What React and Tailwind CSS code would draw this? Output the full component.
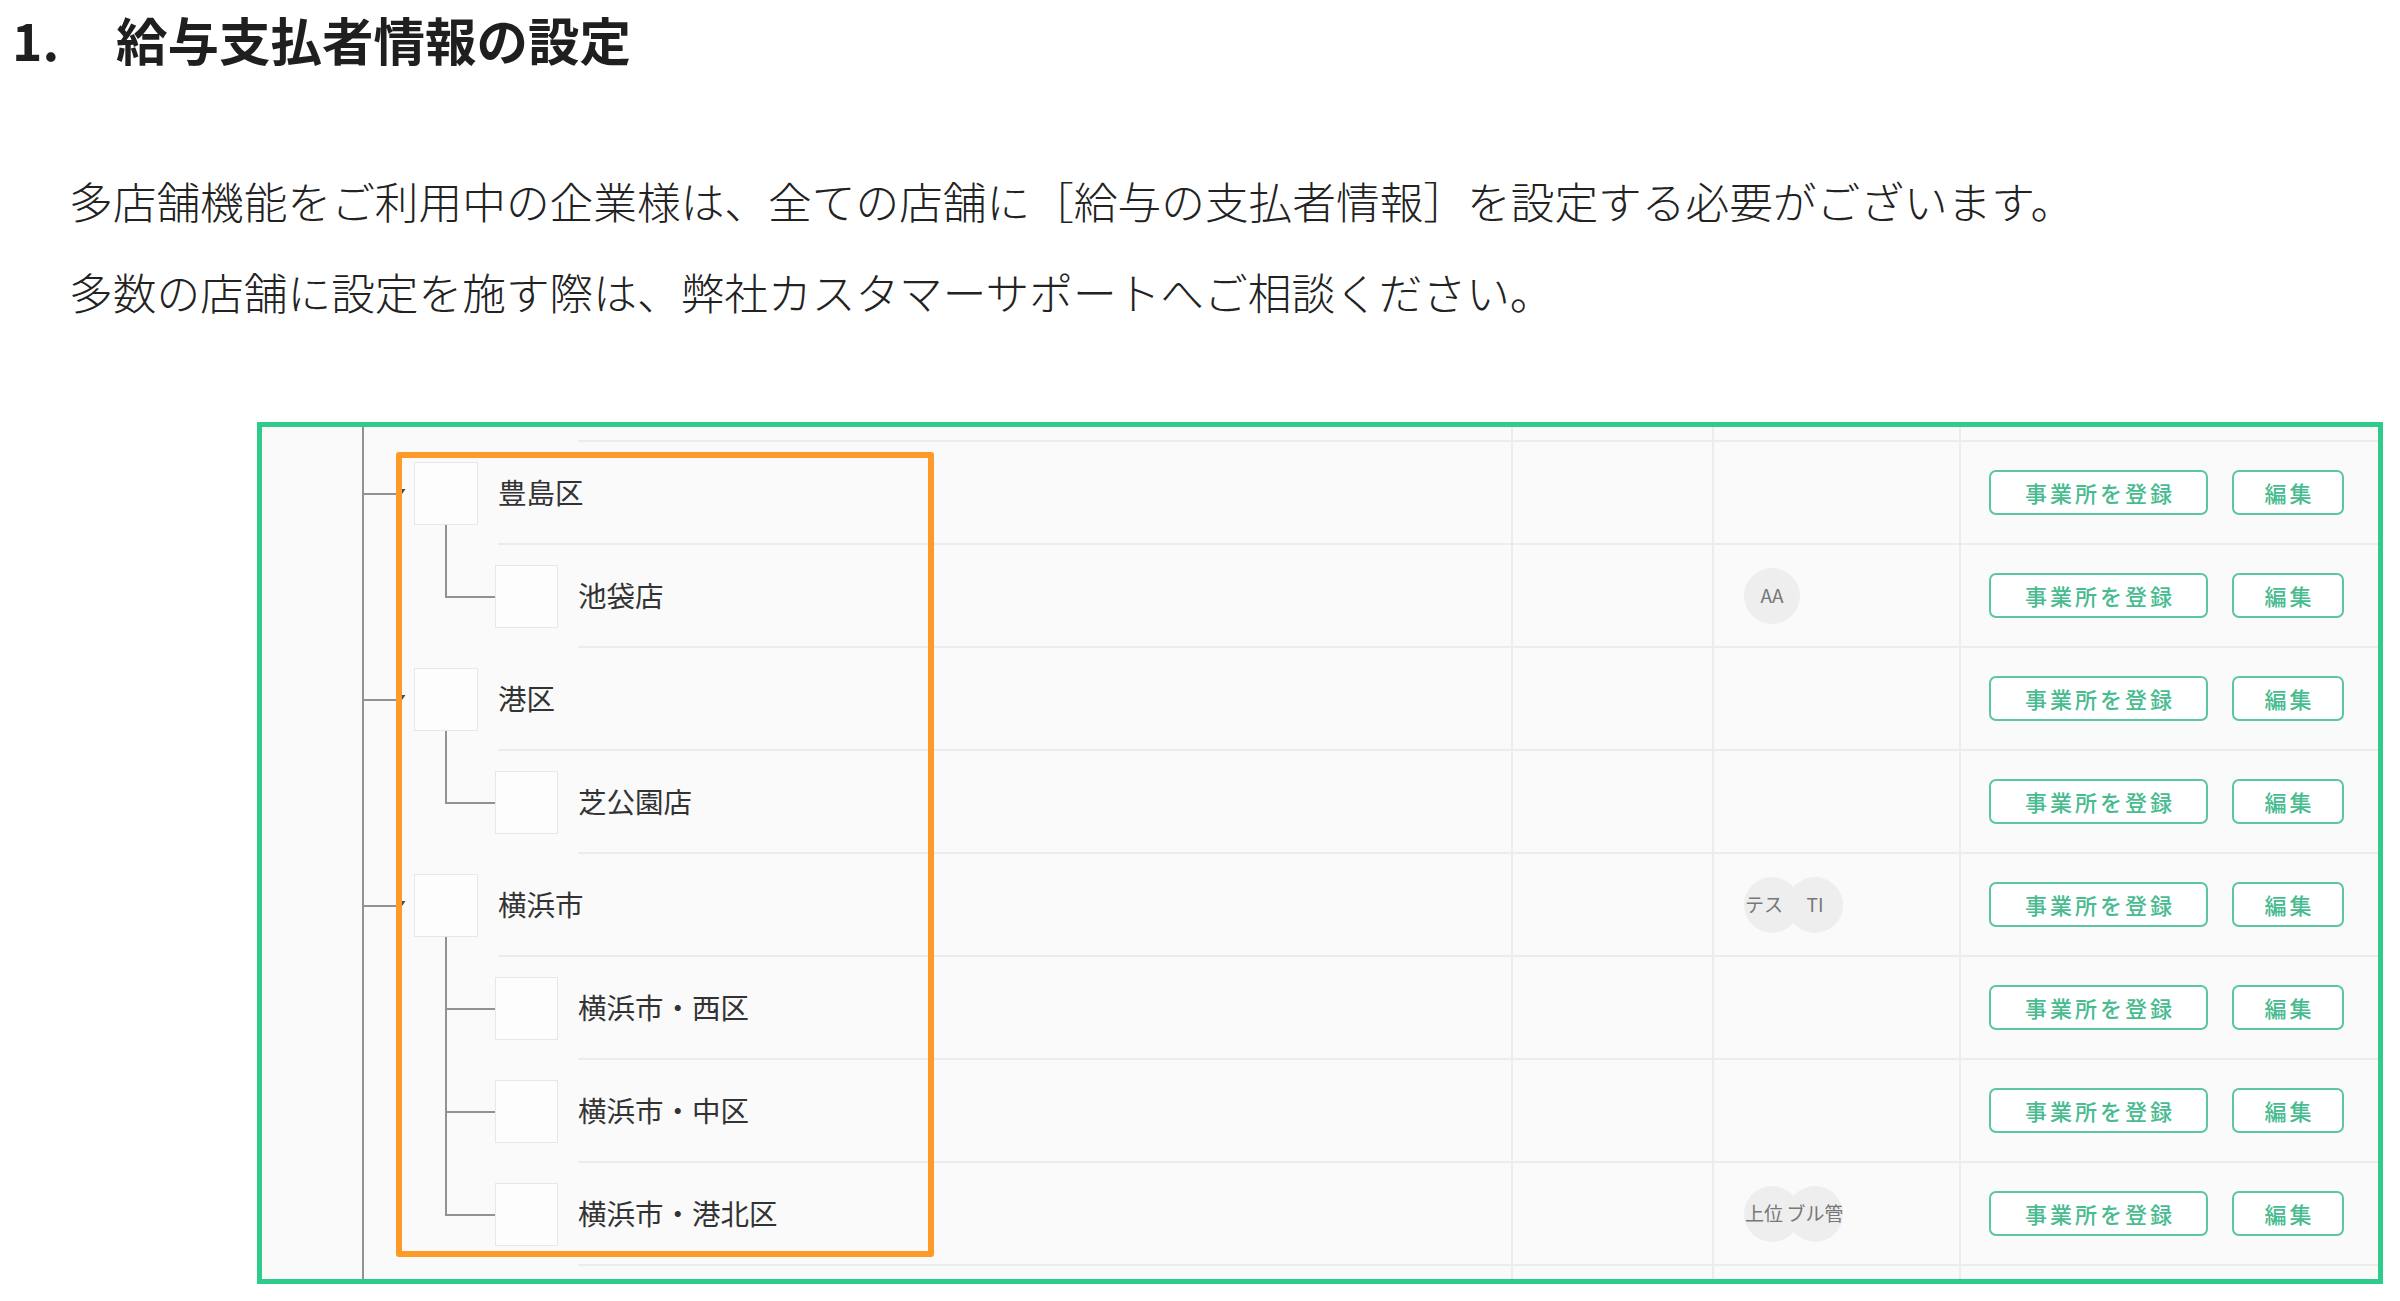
import React from "react";

const LINE = "border-[#929292]";

const ROWS = [
  { label: "豊島区", level: 1, hasChildren: true, avatars: [] },
  { label: "池袋店", level: 2, last: true, avatars: [{ text: "AA" }] },
  { label: "港区", level: 1, hasChildren: true, avatars: [] },
  { label: "芝公園店", level: 2, last: true, avatars: [] },
  {
    label: "横浜市",
    level: 1,
    hasChildren: true,
    avatars: [{ text: "テス", start: true }, { text: "TI" }],
  },
  { label: "横浜市・西区", level: 2, last: false, avatars: [] },
  { label: "横浜市・中区", level: 2, last: false, avatars: [] },
  {
    label: "横浜市・港北区",
    level: 2,
    last: true,
    avatars: [{ text: "上位", start: true }, { text: "ブル管" }],
  },
];

function Spine() {
  return <div className={`w-[102px] shrink-0 border-r-2 ${LINE}`} />;
}

function ParentTree({ hasChildren }) {
  return (
    <div className="flex h-full w-[134px] shrink-0 items-center">
      <div className={`w-[32px] shrink-0 border-t-2 ${LINE}`} />
      <svg width="10" height="8" viewBox="0 0 10 8" className="-mt-[3px] shrink-0">
        <path d="M0.5 1 L9.5 1 L5 7.5 Z" fill="#4a4a4a" />
      </svg>
      <div className="ml-[8px] flex h-full w-[64px] shrink-0 flex-col items-center">
        <div className="flex-1" />
        <div className="h-[63px] w-[64px] shrink-0 border-[1.5px] border-[#e7e7e7] bg-[#fdfdfd]" />
        <div className={hasChildren ? `w-0 flex-1 border-l-2 ${LINE}` : "flex-1"} />
      </div>
    </div>
  );
}

function ChildTree({ last }) {
  return (
    <div className="flex h-full w-[214px] shrink-0 items-center">
      <div className="w-[81px] shrink-0" />
      <div className="flex h-full w-[50px] shrink-0 flex-col">
        <div className={`flex-1 border-b-2 border-l-2 ${LINE}`} />
        <div className={last ? "flex-1" : `flex-1 border-l-2 ${LINE}`} />
      </div>
      <div className="h-[63px] w-[63px] shrink-0 border-[1.5px] border-[#e7e7e7] bg-[#fdfdfd]" />
      <div className="w-[20px] shrink-0" />
    </div>
  );
}

function Avatar({ text, start, overlap }) {
  return (
    <div
      className={`flex h-[56px] w-[56px] shrink-0 items-center overflow-hidden whitespace-nowrap rounded-full bg-[#eeeeee] text-[19px] text-[#777777] ${
        start ? "justify-start pl-[1px]" : "justify-center"
      } ${overlap ? "-ml-[13px]" : ""}`}
    >
      {text}
    </div>
  );
}

function ActionButtons() {
  return (
    <>
      <div className="flex h-[45px] w-[219px] shrink-0 items-center justify-center rounded-[7px] border-2 border-[#5cc6a0] bg-white pl-[3px] text-[22px] font-medium tracking-[3px] text-[#48bb8f]">
        事業所を登録
      </div>
      <div className="flex h-[45px] w-[112px] shrink-0 items-center justify-center rounded-[7px] border-2 border-[#5cc6a0] bg-white pl-[3px] text-[22px] font-medium tracking-[3px] text-[#48bb8f]">
        編集
      </div>
    </>
  );
}

function Row({ row }) {
  return (
    <div className="flex h-[103px] shrink-0">
      <div className="flex w-[1249px] shrink-0">
        <Spine />
        {row.level === 1 ? (
          <ParentTree hasChildren={row.hasChildren} />
        ) : (
          <ChildTree last={row.last} />
        )}
        <div className="flex flex-1 items-center border-b-2 border-[#ececec] text-[28.5px] text-[#333333]">
          {row.label}
        </div>
      </div>
      <div className="w-[201px] shrink-0 border-b-2 border-l-2 border-[#ececec]" />
      <div className="flex w-[247px] shrink-0 items-center border-b-2 border-l-2 border-[#ececec] pl-[30px]">
        {row.avatars.map((a, i) => (
          <Avatar key={i} text={a.text} start={a.start} overlap={i > 0} />
        ))}
      </div>
      <div className="flex flex-1 items-center gap-[24px] border-b-2 border-l-2 border-[#ececec] pl-[28px]">
        <ActionButtons />
      </div>
    </div>
  );
}

function EdgeStrip({ top }) {
  return (
    <div className={top ? "flex h-[15px] shrink-0" : "flex flex-1"}>
      <div className="flex w-[1249px] shrink-0">
        <Spine />
        <div className="w-[214px] shrink-0" />
        <div className={top ? "flex-1 border-b-2 border-[#ececec]" : "flex-1"} />
      </div>
      <div
        className={`w-[201px] shrink-0 border-l-2 border-[#ececec] ${top ? "border-b-2" : ""}`}
      />
      <div
        className={`w-[247px] shrink-0 border-l-2 border-[#ececec] ${top ? "border-b-2" : ""}`}
      />
      <div className={`flex-1 border-l-2 border-[#ececec] ${top ? "border-b-2" : ""}`} />
    </div>
  );
}

export default function App() {
  return (
    <div className="min-h-[1301px] bg-white font-['Noto_Sans_CJK_JP','Noto_Sans',sans-serif] text-[#1f1f1f]">
      <h1 className="flex pl-[12px] pt-[13px] text-[51.5px] font-bold leading-[52px]">
        <span className="w-[104px] shrink-0">1.</span>
        <span>給与支払者情報の設定</span>
      </h1>

      <div className="mt-[90px] pl-[69px] text-[43.7px] font-light leading-[91px] text-[#222222]">
        <p>多店舗機能をご利用中の企業様は、全ての店舗に［給与の支払者情報］を設定する必要がございます。</p>
        <p>多数の店舗に設定を施す際は、弊社カスタマーサポートへご相談ください。</p>
      </div>

      <div className="relative ml-[257px] mt-[85px] flex h-[862px] w-[2126px] flex-col overflow-hidden border-[5px] border-[#2ecb8b] bg-[#fafafa]">
        <EdgeStrip top />
        {ROWS.map((row) => (
          <Row key={row.label} row={row} />
        ))}
        <EdgeStrip />

        {/* highlight frame around the store tree */}
        <div className="pointer-events-none absolute left-[134px] top-[25px] h-[805px] w-[538px] rounded-[3px] border-[6px] border-[#fd9a28]" />
      </div>
    </div>
  );
}
